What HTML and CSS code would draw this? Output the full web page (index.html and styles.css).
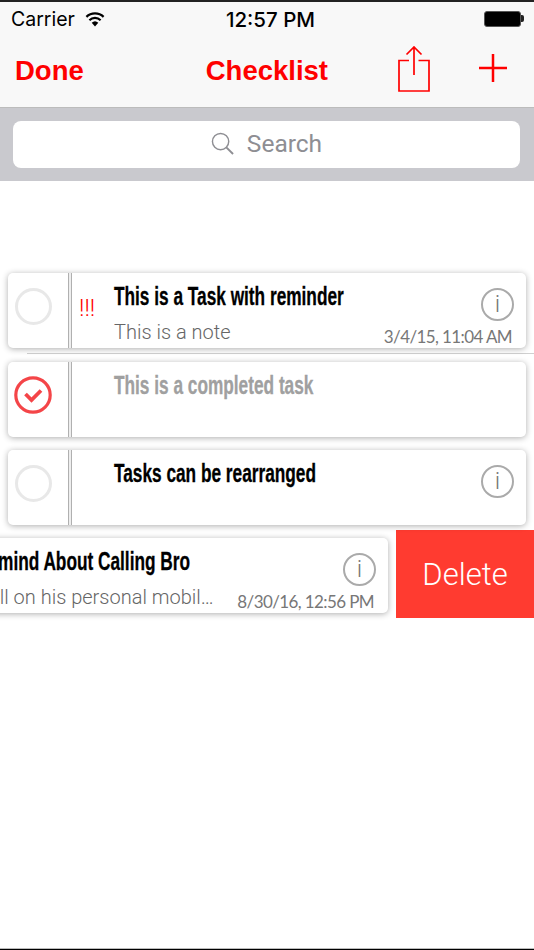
FILE: index.html
```html
<!DOCTYPE html>
<html lang="en">
<head>
  <meta charset="UTF-8">
  <meta name="viewport" content="width=device-width, initial-scale=1.0">
  <title>Checklist</title>
  <link rel="stylesheet" href="styles.css">
</head>
<body>
  <header class="top-bar">
    <div class="status-bar">
      <div class="status-left">
        <span>Carrier</span>
        <svg class="wifi" width="20" height="15" viewBox="0 0 20 15">
          <path d="M10 14.500 L6.700 10.800 A4.800 4.800 0 0 1 13.300 10.800 Z" fill="#000"/>
          <path d="M4.400 8.200 A8 8 0 0 1 15.600 8.200 M1.400 4.900 A12.400 12.400 0 0 1 18.600 4.900" fill="none" stroke="#000" stroke-width="2.200"/>
        </svg>
      </div>
      <span class="status-time">12:57 PM</span>
      <div class="battery"><span class="battery-cap"></span></div>
    </div>
    <nav class="nav-bar">
      <span class="nav-done">Done</span>
      <span class="nav-title">Checklist</span>
      <svg class="nav-share" width="32" height="46" viewBox="0 0 32 46">
        <path d="M11 14.500 H1 V45 H31 V14.500 H20.500 M16 29 V1 M8.500 8.500 L16 1 L23.500 8.500" fill="none" stroke="#ff0000" stroke-width="1.700"/>
      </svg>
      <svg class="nav-add" width="28" height="28" viewBox="0 0 28 28">
        <path d="M14 0 V28 M0 14 H28" fill="none" stroke="#ff0000" stroke-width="2.500"/>
      </svg>
    </nav>
  </header>

  <div class="search-bar">
    <div class="search-field">
      <svg width="23" height="23" viewBox="0 0 24 24">
        <circle cx="10" cy="10" r="8.500" fill="none" stroke="#8e8e93" stroke-width="1.500"/>
        <path d="M16 16 L23 23" fill="none" stroke="#8e8e93" stroke-width="2"/>
      </svg>
      <span>Search</span>
    </div>
  </div>

  <main class="task-list">
    <div class="task-row has-separator">
      <div class="task-card">
        <div class="task-check"><span class="circle"></span></div>
        <div class="task-divider"></div>
        <div class="task-priority">!!!</div>
        <div class="task-body">
          <div class="task-title">This is a Task with reminder</div>
          <div class="task-note">This is a note</div>
        </div>
        <span class="info-icon">i</span>
        <span class="task-date">3/4/15, 11:04 AM</span>
      </div>
    </div>

    <div class="task-row">
      <div class="task-card">
        <div class="task-check">
          <svg width="38" height="38" viewBox="0 0 38 38">
            <circle cx="19" cy="19" r="17.200" fill="none" stroke="#f44548" stroke-width="3.200"/>
            <path d="M11.500 18 L17.500 24 L27 14.500" fill="none" stroke="#f44548" stroke-width="3.800"/>
          </svg>
        </div>
        <div class="task-divider"></div>
        <div class="task-priority"></div>
        <div class="task-body">
          <div class="task-title done">This is a completed task</div>
        </div>
      </div>
    </div>

    <div class="task-row">
      <div class="task-card">
        <div class="task-check"><span class="circle"></span></div>
        <div class="task-divider"></div>
        <div class="task-priority"></div>
        <div class="task-body">
          <div class="task-title">Tasks can be rearranged</div>
        </div>
        <span class="info-icon">i</span>
      </div>
    </div>

    <div class="task-row swiped">
      <div class="task-card">
        <div class="task-check"><span class="circle"></span></div>
        <div class="task-divider"></div>
        <div class="task-priority"></div>
        <div class="task-body">
          <div class="task-title">Remind About Calling Bro</div>
          <div class="task-note">Call on his personal mobile number</div>
        </div>
        <span class="info-icon">i</span>
        <span class="task-date">8/30/16, 12:56 PM</span>
      </div>
      <div class="delete-btn">Delete</div>
    </div>
  </main>
</body>
</html>
```

FILE: styles.css
```css
body {
  margin: 0;
  box-sizing: border-box;
  height: 950px;
  overflow: hidden;
  font-family: "Liberation Sans", Arial, sans-serif;
  background-color: #fff;
  border-top: 2px solid #222;
  border-bottom: 1px solid #000;
  box-shadow: inset 0 -1px 0 #bbb;
}
.top-bar {
  height: 106px;
  box-sizing: border-box;
  background-color: #f8f8f8;
  border-bottom: 1px solid #bcbcbc;
}
.status-bar {
  height: 34px;
  display: grid;
  grid-template-columns: 1fr auto 1fr;
  align-items: center;
  padding: 0 10px 0 11px;
  font-family: Inter, sans-serif;
  font-size: 19.500px;
  color: #000;
}
.status-left {
  display: flex;
  align-items: center;
  gap: 10px;
}
.status-time {
  margin-left: 6px;
  font-weight: 500;
  font-size: 20.500px;
}
.battery {
  justify-self: end;
  width: 37px;
  height: 16px;
  margin-right: 3px;
  box-sizing: border-box;
  background-color: #000;
  border: 1px solid #555;
  border-radius: 3px;
  position: relative;
}
.battery-cap {
  position: absolute;
  left: 36px;
  top: 3px;
  width: 3px;
  height: 7px;
  border-radius: 0 2px 2px 0;
  background-color: #222;
}
.nav-bar {
  height: 71px;
  display: flex;
  align-items: center;
  color: #ff0000;
  font-weight: bold;
  font-size: 27.500px;
}
.nav-done {
  margin-left: 15px;
  margin-top: -1px;
}
.nav-title {
  margin-left: 122px;
  margin-top: -1px;
}
.nav-share {
  margin-left: 70px;
  margin-top: -5px;
}
.nav-add {
  margin-left: 49px;
  margin-top: -7px;
}
.search-bar {
  height: 73px;
  box-sizing: border-box;
  padding: 13px 14px 13px 13px;
  background-color: #c9c9ce;
}
.search-field {
  height: 47px;
  box-sizing: border-box;
  padding-bottom: 2px;
  display: flex;
  align-items: center;
  justify-content: center;
  gap: 13px;
  background-color: #fff;
  border-radius: 8px;
  color: #8e8e93;
  font-family: Roboto, sans-serif;
  font-size: 24.500px;
}
.task-list {
  padding-top: 84px;
}
.task-row {
  height: 88.500px;
  box-sizing: border-box;
  padding: 8px 8px 0;
  position: relative;
}
.has-separator::after {
  content: "";
  position: absolute;
  left: 27px;
  right: 0;
  bottom: 0;
  height: 1px;
  background-color: #d0d0d0;
}
.task-card {
  position: relative;
  z-index: 1;
  width: 518px;
  height: 75px;
  display: flex;
  background-color: #fff;
  border-radius: 5px;
  box-shadow: 0 1px 6px rgba(0, 0, 0, 0.32);
}
.task-check {
  width: 60px;
  flex: none;
  display: flex;
  align-items: center;
  justify-content: center;
  box-sizing: border-box;
  padding: 0 10px 9px 0;
}
.circle {
  width: 37px;
  height: 37px;
  box-sizing: border-box;
  border: 3px solid #e8e8e8;
  border-radius: 50%;
}
.task-divider {
  width: 4px;
  flex: none;
  box-sizing: border-box;
  background-color: #eee;
  border-left: 1px solid #b0b0b0;
  border-right: 1px solid #b0b0b0;
}
.task-priority {
  width: 42px;
  flex: none;
  box-sizing: border-box;
  padding: 21px 0 0 7px;
  color: #ff0000;
  font-family: Roboto, sans-serif;
  font-weight: 300;
  font-size: 24px;
  line-height: 28px;
  letter-spacing: 0;
}
.task-body {
  min-width: 0;
  width: 348px;
}
.task-title {
  margin-top: 8px;
  font-weight: bold;
  font-size: 25px;
  line-height: 30px;
  color: #000;
  white-space: nowrap;
  transform: scaleX(0.69);
  transform-origin: left center;
  -webkit-text-stroke: 0.3px currentColor;
}
.task-title.done {
  color: #a0a0a0;
}
.task-note {
  margin-top: 9px;
  width: 241px;
  overflow: hidden;
  white-space: nowrap;
  text-overflow: ellipsis;
  font-family: Roboto, sans-serif;
  font-weight: 300;
  font-size: 20px;
  line-height: 24px;
  color: #666;
}
.info-icon {
  position: absolute;
  right: 12px;
  top: 15px;
  width: 33px;
  height: 33px;
  box-sizing: border-box;
  border: 2px solid #aaa;
  border-radius: 50%;
  text-align: center;
  font-family: Roboto, sans-serif;
  font-weight: 300;
  font-size: 24px;
  line-height: 28px;
  color: #777;
}
.task-date {
  position: absolute;
  right: 14px;
  bottom: 1px;
  font-family: Lato, sans-serif;
  font-size: 17px;
  letter-spacing: -0.6px;
  color: #777;
}
.swiped {
  padding-top: 7.500px;
}
.swiped .task-card {
  margin-left: -138px;
}
.delete-btn {
  position: absolute;
  left: 396px;
  right: 0;
  top: -0.500px;
  height: 88px;
  display: flex;
  align-items: center;
  justify-content: center;
  background-color: #ff3b30;
  color: #fff;
  font-family: Roboto, sans-serif;
  font-weight: 300;
  font-size: 31px;
}
```
